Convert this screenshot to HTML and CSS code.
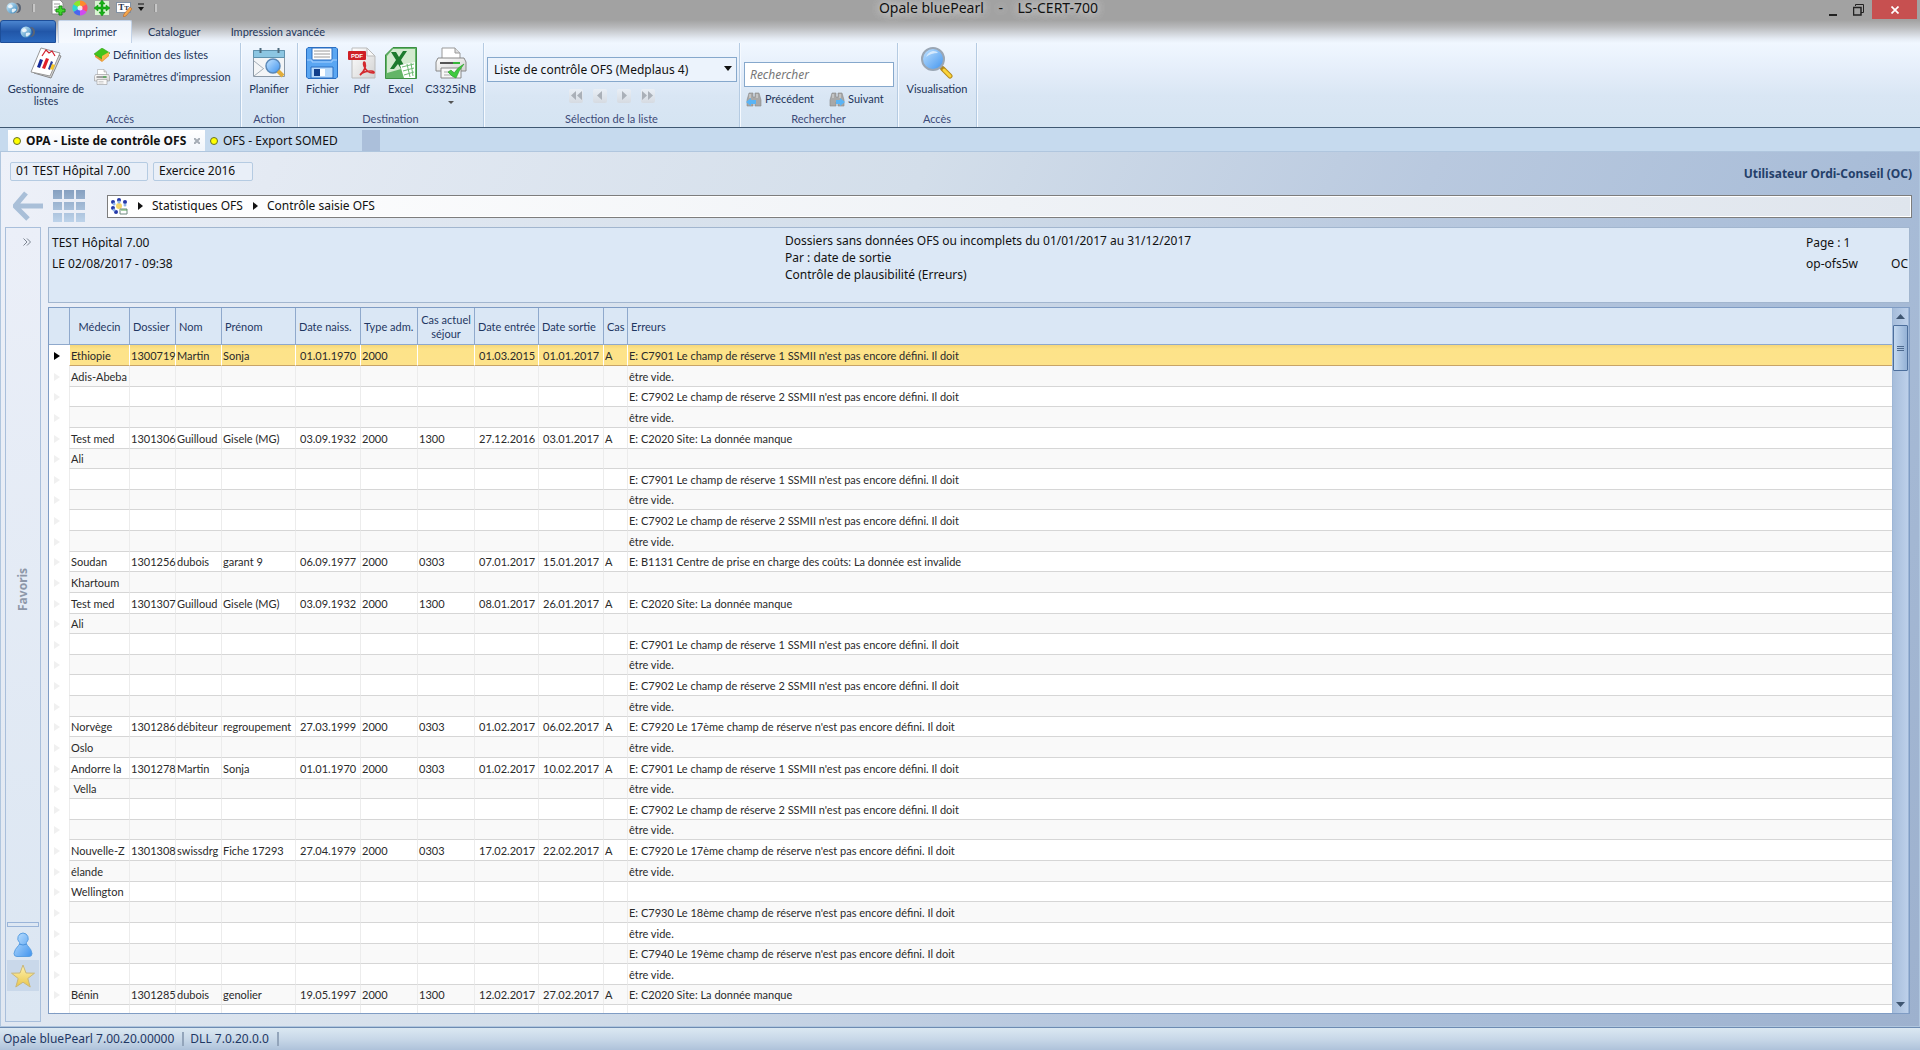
FILE: index.html
```html
<!DOCTYPE html>
<html lang="fr">
<head>
<meta charset="utf-8">
<title>Opale bluePearl - LS-CERT-700</title>
<link rel="stylesheet" href="styles.css">
</head>
<body>
<svg class="defs" aria-hidden="true">
  <defs>
    <linearGradient id="g-blue" x1="0" y1="0" x2="1" y2="1"><stop offset="0" stop-color="#c4e4ff"/><stop offset="1" stop-color="#3f93ee"/></linearGradient>
    <linearGradient id="g-globe" x1="0" y1="0" x2="1" y2="1"><stop offset="0" stop-color="#d9f3ff"/><stop offset="1" stop-color="#2d7fb8"/></linearGradient>
    <linearGradient id="g-paper" x1="0" y1="0" x2="1" y2="1"><stop offset="0" stop-color="#ffffff"/><stop offset="1" stop-color="#d2d2d2"/></linearGradient>
    <linearGradient id="g-tiles" x1="0" y1="0" x2="0" y2="1"><stop offset="0" stop-color="#86a0c0"/><stop offset="1" stop-color="#bdd3ea"/></linearGradient>
    <linearGradient id="g-star" x1="0" y1="0" x2="0" y2="1"><stop offset="0" stop-color="#fff3b0"/><stop offset="1" stop-color="#e9c64c"/></linearGradient>
    <symbol id="globe" viewBox="0 0 16 12"><path d="M10 1q5 0 5 5t-5 5q3-2 3-5t-3-5z" fill="#5a6474"/><circle cx="6" cy="6" r="5.500" fill="url(#g-globe)"/><path d="M2 4q2-3 4-1t-1 3-3-2zM6 7q3-1 4 0t-2 3-2-3z" fill="#fff" opacity=".8"/></symbol>
    <symbol id="printer" viewBox="0 0 32 32"><path d="M7 12V1h13l5 5v6z" fill="#fff" stroke="#999"/><path d="M20 1v5h5" fill="#ddd" stroke="#999"/><path d="M3 11h26l2 4v9H1v-9z" fill="url(#g-paper)" stroke="#888"/><path d="M5 16h20" stroke="#222" stroke-width="1.500"/><path d="M18 16h7" stroke="#35b53a" stroke-width="2"/><path d="M6 21h20v10H6z" fill="#f8f8f8" stroke="#888"/><path d="M9 25h10M9 28h10" stroke="#aaa"/></symbol>
    <symbol id="binocular" viewBox="0 0 16 16"><path d="M3 2h4v4h2V2h4l2 7v6H9v-4H7v4H1V9z" fill="#a8a8a8" stroke="#888" stroke-width=".6"/><path d="M4 3v4M11 3v4" stroke="#ddd"/></symbol>
  </defs>
</svg>

<header class="app-head">
  <div class="title-bar">
    <div class="quick">
      <button class="plain q-globe" aria-label="Opale"><svg width="16" height="12"><use href="#globe"/></svg></button>
      <span class="grip"></span>
      <button class="plain q-item" aria-label="Nouveau"><svg width="16" height="16" viewBox="0 0 16 16"><path d="M2 0h8l3 3v11H2z" fill="#fff" stroke="#8c8c8c"/><path d="M4 4h6M4 7h6M4 10h3" stroke="#999"/><path d="M9 6h3v3h3v3h-3v3H9v-3H6V9h3z" fill="#41d62c" stroke="#178a12"/></svg></button>
      <button class="plain q-item" aria-label="Couleurs"><svg width="16" height="16" viewBox="-8 -8 16 16"><path d="M0 0V-7.500A7.500 7.500 0 0 1 6.500-3.700z" fill="#ff8a2a"/><path d="M0 0 6.500-3.700A7.500 7.500 0 0 1 6.500 3.700z" fill="#ff4a6a"/><path d="M0 0 6.500 3.700A7.500 7.500 0 0 1 0 7.500z" fill="#d04af0"/><path d="M0 0V7.500A7.500 7.500 0 0 1-6.500 3.700z" fill="#4a66f0"/><path d="M0 0-6.500 3.700A7.500 7.500 0 0 1-6.500-3.700z" fill="#2ad8d0"/><path d="M0 0-6.500-3.700A7.500 7.500 0 0 1 0-7.500z" fill="#8ae82a"/><circle r="2.500" fill="#fff" opacity=".8"/></svg></button>
      <button class="plain q-item" aria-label="Ajuster"><svg width="16" height="16" viewBox="0 0 16 16"><rect x="1" y="1" width="14" height="14" fill="#d8f5d2"/><path d="M8 0l3 4H9v3h3V5l4 3-4 3V9H9v3h2l-3 4-3-4h2V9H4v2L0 8l4-3v2h3V4H5z" fill="#16b016" stroke="#0b8a0b" stroke-width=".5"/></svg></button>
      <button class="plain q-item q-text" aria-label="Texte"><span class="tt">T<small>T</small></span><svg class="pencil" width="9" height="10" viewBox="0 0 9 10"><path d="M0 10l1-3 6-7 2 2-6 7z" fill="#f4a64a" stroke="#b8662a" stroke-width=".6"/></svg></button>
      <button class="plain q-more" aria-label="Personnaliser"><svg width="6" height="9" viewBox="0 0 6 9"><path d="M0 1h6" stroke="#111"/><path d="M0 4h6L3 8z" fill="#111"/></svg></button>
      <span class="grip"></span>
    </div>
    <h1 class="app-title">Opale bluePearl&nbsp;&nbsp;&nbsp; -&nbsp;&nbsp;&nbsp; LS-CERT-700</h1>
    <div class="win">
      <button class="plain" aria-label="Réduire"><svg width="8" height="12" viewBox="0 0 8 12"><path d="M0 11h8" stroke="#222" stroke-width="2"/></svg></button>
      <button class="plain" aria-label="Restaurer"><svg width="11" height="12" viewBox="0 0 11 12"><path d="M2.500 2V.5h8v8H8" fill="none" stroke="#222"/><path d="M0 3.500h8V11H.5V3" fill="none" stroke="#222" stroke-width="1.500"/></svg></button>
      <button class="plain close" aria-label="Fermer"><svg width="8" height="8" viewBox="0 0 8 8"><path d="M.5.5l7 7M7.500.5l-7 7" stroke="#fff" stroke-width="1.700"/></svg></button>
    </div>
  </div>
  <nav class="ribbon-tabs">
    <button class="file-tab" aria-label="Fichier"><svg width="16" height="12"><use href="#globe"/></svg></button>
    <a href="#" class="rtab rtab-on">Imprimer</a>
    <a href="#" class="rtab">Cataloguer</a>
    <a href="#" class="rtab">Impression avancée</a>
  </nav>
  <div class="ribbon">
    <section class="group g-access">
      <div class="tools">
        <button class="big big-wide"><svg width="32" height="32" viewBox="0 0 32 32"><path d="M4 26 12 3l19 6-10 22z" fill="#d5d5d5" stroke="#888"/><path d="M1 25 11 1l19 5-10 23z" fill="#fff" stroke="#999"/><path d="M12 9l4-6 3 3 3-2 3 5" fill="none" stroke="#d21f2c" stroke-width="1.200"/><path d="M10 12l3 1-3 8-3-1z" fill="#152a9a"/><path d="M16 11l3 1-4 10-3-1z" fill="#e01f28"/><path d="M21 14l2 1-3 8-2-1z" fill="#2a3f9a"/><path d="M22 17l3 1-2 5-3-1z" fill="#f4c62a"/></svg><span>Gestionnaire de listes</span></button>
        <div class="smalls">
          <button class="small"><svg width="16" height="14" viewBox="0 0 16 14"><path d="M1 6v3l7 5 7-6V5z" fill="#e89a3a"/><path d="M0 6 8 0l8 5-8 6z" fill="#43c41c" stroke="#2c9a12" stroke-width=".5"/><path d="M8 8l7-4v3l-7 6z" fill="#f6b84a"/></svg>Définition des listes</button>
          <button class="small"><svg width="16" height="16"><use href="#printer"/></svg>Paramètres d'impression</button>
        </div>
      </div>
      <h2>Accès</h2>
    </section>
    <section class="group g-action">
      <div class="tools">
        <button class="big"><svg width="32" height="32" viewBox="0 0 32 32"><path d="M.5 3.500h31v26H.5z" fill="#f3f5f7" stroke="#8a98a6"/><path d="M.5 3.500h31v7H.5z" fill="#8cc6e2" stroke="#5f92ae"/><path d="M7.500 1v5M25.500 1v5" stroke="#4d6a7d" stroke-width="2"/><path d="M1 14l10 8M1 29l9-7" stroke="#a4aeb8"/><circle cx="20" cy="19" r="7" fill="url(#g-blue)" stroke="#5a88b8" stroke-width="1.500"/><path d="M25 24l5 5" stroke="#e2ae3c" stroke-width="4"/></svg><span>Planifier</span></button>
      </div>
      <h2>Action</h2>
    </section>
    <section class="group g-dest">
      <div class="tools">
        <button class="big"><svg width="32" height="32" viewBox="0 0 32 32"><path d="M2 .5h28L31.500 2v28L30 31.500H2L.5 30V2z" fill="#5aa6f2" stroke="#2a6fc2"/><path d="M6 1h20v12H6z" fill="#fff" stroke="#2a6fc2"/><path d="M8 4h16M8 7h16M8 10h16" stroke="#9a9a9a"/><path d="M1 13h5v2h20v-2h5" fill="none" stroke="#a5d0ff"/><path d="M5 20h22v11H5z" fill="#b5d8fb" stroke="#2a6fc2"/><path d="M8 22h6v7H8z" fill="#123f8c"/><path d="M14 22h5v7h-5z" fill="#fff"/></svg><span>Fichier</span></button>
        <button class="big"><svg width="28" height="32" viewBox="0 0 28 32"><path d="M4 1h15l8 8v22H4z" fill="url(#g-paper)" stroke="#bbb"/><path d="M19 1v8h8z" fill="#f8f8f8" stroke="#bbb"/><rect y="4" width="18" height="9" rx="1" fill="#cf2026"/><text x="3" y="11" class="pdf-tag">PDF</text><path d="M12 28c5-4 6-9 5-12-1-2-2 0-1 3 2 5 6 7 9 7 2 0 1-2-2-2-5 0-9 2-11 4z" fill="none" stroke="#d42a2f" stroke-width="1.700"/></svg><span>Pdf</span></button>
        <button class="big"><svg width="32" height="32" viewBox="0 0 32 32"><path d="M8 .5h23.500v31H.5V8z" fill="#63b567" stroke="#3c8f43"/><path d="M8 2h22v16L2 26V9z" fill="#dff0da" opacity=".9"/><path d="M6 5h5l3 5 4-6h4l-6 9 5 9h-5l-3-5-4 5H5l6-9z" fill="#1d7a2d"/><path d="M15 18l15-3v16H19z" fill="#fff"/><path d="M17 20l12-3M18 24l11-3M19 28l10-3M22 17l3 13M26 16l2 13" stroke="#6dbb72"/></svg><span>Excel</span></button>
        <button class="big big-print"><svg width="32" height="32" viewBox="0 0 32 32"><use href="#printer"/><path d="M13 25l3-2 3 3q4-6 10-9-5 6-8 14-4-1-8-6z" fill="#3fca3f" stroke="#2a972a" stroke-width=".6"/></svg><span>C3325iNB</span><i class="drop"></i></button>
      </div>
      <h2>Destination</h2>
    </section>
    <section class="group g-select">
      <div class="tools tools-col">
        <div class="combo"><select aria-label="Liste"><option>Liste de contrôle OFS (Medplaus 4)</option></select></div>
        <div class="pager">
          <button class="page" aria-label="Première"><svg width="14" height="14" viewBox="0 0 14 14"><path d="M7 2v9L2 6.500zM13 2v9L8 6.500z" fill="#aab0b8"/></svg></button>
          <button class="page" aria-label="Précédente"><svg width="14" height="14" viewBox="0 0 14 14"><path d="M9 2v9L4 6.500z" fill="#aab0b8"/></svg></button>
          <button class="page" aria-label="Suivante"><svg width="14" height="14" viewBox="0 0 14 14"><path d="M5 2v9l5-4.500z" fill="#aab0b8"/></svg></button>
          <button class="page" aria-label="Dernière"><svg width="14" height="14" viewBox="0 0 14 14"><path d="M1 2v9l5-4.500zM7 2v9l5-4.500z" fill="#aab0b8"/></svg></button>
        </div>
      </div>
      <h2>Sélection de la liste</h2>
    </section>
    <section class="group g-search">
      <div class="tools tools-col">
        <input class="search" type="text" placeholder="Rechercher" aria-label="Rechercher">
        <div class="finders">
          <button class="small"><svg width="16" height="16" viewBox="0 0 16 16"><use href="#binocular"/><path d="M0 11l5-4v2h5v4H5v2z" fill="#5ab4f5"/></svg>Précédent</button>
          <button class="small"><svg width="16" height="16" viewBox="0 0 16 16"><use href="#binocular"/><path d="M16 11l-5-4v2H7v4h4v2z" fill="#5ab4f5"/></svg>Suivant</button>
        </div>
      </div>
      <h2>Rechercher</h2>
    </section>
    <section class="group g-view">
      <div class="tools">
        <button class="big"><svg width="32" height="32" viewBox="0 0 32 32"><path d="M19 19l4 4" stroke="#8a8a8a" stroke-width="4"/><path d="M22 22l7 7" stroke="#b58a1a" stroke-width="5" stroke-linecap="round"/><path d="M23 23l6 6" stroke="#fbd53a" stroke-width="3" stroke-linecap="round"/><circle cx="12" cy="12" r="11" fill="url(#g-blue)" stroke="#9aa6b4" stroke-width="2"/><path d="M5 10q2-5 7-6 4 0 5 2-7 0-12 4z" fill="#fff" opacity=".6"/></svg><span>Visualisation</span></button>
      </div>
      <h2>Accès</h2>
    </section>
  </div>
</header>

<nav class="doc-tabs">
  <a href="#" class="doc doc-on"><i class="dot"></i>OPA - Liste de contrôle OFS<svg class="doc-x" width="6" height="6" viewBox="0 0 6 6"><path d="M0 0l6 6M6 0L0 6" stroke="#a6adb6" stroke-width="2"/></svg></a>
  <a href="#" class="doc"><i class="dot"></i>OFS - Export SOMED</a>
  <button class="doc-new" aria-label="Nouvel onglet"></button>
</nav>

<main class="work">
  <div class="context">
    <button class="ctx ctx-a">01 TEST Hôpital 7.00</button>
    <button class="ctx ctx-b">Exercice 2016</button>
    <strong class="user">Utilisateur Ordi-Conseil (OC)</strong>
  </div>
  <div class="nav-row">
    <button class="plain" aria-label="Retour"><svg width="30" height="30" viewBox="0 0 30 30"><path d="M13 2 2 15l13 13M2 15h28" fill="none" stroke="#a9bfd8" stroke-width="5"/></svg></button>
    <button class="plain nav-grid" aria-label="Menu"><svg width="32" height="32" viewBox="0 0 32 32"><path d="M0 0h9v9H0zM11 0h10v9H11zM23 0h9v9h-9zM0 12h9v8H0zM11 12h10v8H11zM23 12h9v8h-9zM0 23h9v9H0zM11 23h10v9H11zM23 23h9v9h-9z" fill="url(#g-tiles)"/></svg></button>
    <nav class="crumbs">
      <svg width="17" height="17" viewBox="0 0 17 17"><circle cx="8" cy="8" r="3" fill="#f5d66b"/><g fill="#2438a8"><circle cx="8" cy="2" r="2"/><circle cx="2" cy="4" r="2"/><circle cx="14" cy="4" r="2"/><circle cx="2" cy="10" r="2"/><circle cx="5" cy="14" r="2"/></g><g fill="#8fb4ea"><circle cx="8" cy="4" r="1.500"/><circle cx="3" cy="6" r="1.500"/><circle cx="14" cy="7" r="1.500"/><circle cx="3" cy="12" r="1.500"/></g><path d="M9 11h7v5H9z" fill="#fff" stroke="#6f8a80"/><path d="M10 12h6" stroke="#52a552"/></svg>
      <i class="arrow"></i><a href="#">Statistiques OFS</a><i class="arrow"></i><a href="#">Contrôle saisie OFS</a>
    </nav>
  </div>
  <div class="body">
    <aside class="side">
      <button class="plain expand" aria-label="Déplier"><svg width="8" height="8" viewBox="0 0 8 8"><path d="M.5.5 4 4 .5 7.500M4 .5 7.500 4 4 7.500" fill="none" stroke="#7d8591"/></svg></button>
      <div class="fav">Favoris</div>
      <div class="splitter"></div>
      <button class="plain side-btn" aria-label="Utilisateur"><svg width="20" height="26" viewBox="0 0 20 26"><path d="M10 1a5.500 5.500 0 0 1 3.500 9.500q-1 1 1 3 4 4 4.500 8 0 3-3 3H4q-3 0-3-3 .5-4 4.500-8 2-2 1-3A5.500 5.500 0 0 1 10 1z" fill="url(#g-blue)" stroke="#5a9fe2"/><path d="M6 12q4 2 8 0" fill="none" stroke="#4a93dc"/></svg></button>
      <button class="plain side-btn side-on" aria-label="Favoris"><svg width="24" height="24" viewBox="0 0 24 24"><path d="M12 1l3 8 8.500.2-6.700 5.300L19.200 23 12 18.200 4.800 23l2.400-8.500L.5 9.200 9 9z" fill="url(#g-star)" stroke="#c9b77a"/></svg></button>
    </aside>
    <div class="report">
      <section class="info">
        <p class="info-left">TEST Hôpital 7.00<br>LE 02/08/2017 - 09:38</p>
        <p class="info-mid">Dossiers sans données OFS ou incomplets du 01/01/2017 au 31/12/2017<br>Par : date de sortie<br>Contrôle de plausibilité (Erreurs)</p>
        <p class="info-right"><span>Page : 1</span><span class="prog">op-ofs5w</span><span>OC</span></p>
      </section>
      <section class="list">
        <div class="list-view">
        <table>
          <colgroup><col class="c-mark"><col class="c-med"><col class="c-dos"><col class="c-dos"><col class="c-pre"><col class="c-date"><col class="c-adm"><col class="c-adm"><col class="c-out"><col class="c-date"><col class="c-cas"><col></colgroup>
          <thead><tr><th></th><th class="mid">Médecin</th><th>Dossier</th><th>Nom</th><th>Prénom</th><th>Date naiss.</th><th>Type adm.</th><th class="mid">Cas actuel séjour</th><th>Date entrée</th><th>Date sortie</th><th>Cas</th><th>Erreurs</th></tr></thead>
          <tbody>
          <tr class="sel"><td></td><td>Ethiopie</td><td>1300719</td><td>Martin</td><td>Sonja</td><td>01.01.1970</td><td>2000</td><td></td><td>01.03.2015</td><td>01.01.2017</td><td>A</td><td>E: C7901 Le champ de réserve 1 SSMII n'est pas encore défini. Il doit</td></tr>
          <tr><td></td><td>Adis-Abeba</td><td></td><td></td><td></td><td></td><td></td><td></td><td></td><td></td><td></td><td>être vide.</td></tr>
          <tr><td></td><td></td><td></td><td></td><td></td><td></td><td></td><td></td><td></td><td></td><td></td><td>E: C7902 Le champ de réserve 2 SSMII n'est pas encore défini. Il doit</td></tr>
          <tr><td></td><td></td><td></td><td></td><td></td><td></td><td></td><td></td><td></td><td></td><td></td><td>être vide.</td></tr>
          <tr><td></td><td>Test med</td><td>1301306</td><td>Guilloud</td><td>Gisele (MG)</td><td>03.09.1932</td><td>2000</td><td>1300</td><td>27.12.2016</td><td>03.01.2017</td><td>A</td><td>E: C2020 Site: La donnée manque</td></tr>
          <tr><td></td><td>Ali</td><td></td><td></td><td></td><td></td><td></td><td></td><td></td><td></td><td></td><td></td></tr>
          <tr><td></td><td></td><td></td><td></td><td></td><td></td><td></td><td></td><td></td><td></td><td></td><td>E: C7901 Le champ de réserve 1 SSMII n'est pas encore défini. Il doit</td></tr>
          <tr><td></td><td></td><td></td><td></td><td></td><td></td><td></td><td></td><td></td><td></td><td></td><td>être vide.</td></tr>
          <tr><td></td><td></td><td></td><td></td><td></td><td></td><td></td><td></td><td></td><td></td><td></td><td>E: C7902 Le champ de réserve 2 SSMII n'est pas encore défini. Il doit</td></tr>
          <tr><td></td><td></td><td></td><td></td><td></td><td></td><td></td><td></td><td></td><td></td><td></td><td>être vide.</td></tr>
          <tr><td></td><td>Soudan</td><td>1301256</td><td>dubois</td><td>garant 9</td><td>06.09.1977</td><td>2000</td><td>0303</td><td>07.01.2017</td><td>15.01.2017</td><td>A</td><td>E: B1131 Centre de prise en charge des coûts: La donnée est invalide</td></tr>
          <tr><td></td><td>Khartoum</td><td></td><td></td><td></td><td></td><td></td><td></td><td></td><td></td><td></td><td></td></tr>
          <tr><td></td><td>Test med</td><td>1301307</td><td>Guilloud</td><td>Gisele (MG)</td><td>03.09.1932</td><td>2000</td><td>1300</td><td>08.01.2017</td><td>26.01.2017</td><td>A</td><td>E: C2020 Site: La donnée manque</td></tr>
          <tr><td></td><td>Ali</td><td></td><td></td><td></td><td></td><td></td><td></td><td></td><td></td><td></td><td></td></tr>
          <tr><td></td><td></td><td></td><td></td><td></td><td></td><td></td><td></td><td></td><td></td><td></td><td>E: C7901 Le champ de réserve 1 SSMII n'est pas encore défini. Il doit</td></tr>
          <tr><td></td><td></td><td></td><td></td><td></td><td></td><td></td><td></td><td></td><td></td><td></td><td>être vide.</td></tr>
          <tr><td></td><td></td><td></td><td></td><td></td><td></td><td></td><td></td><td></td><td></td><td></td><td>E: C7902 Le champ de réserve 2 SSMII n'est pas encore défini. Il doit</td></tr>
          <tr><td></td><td></td><td></td><td></td><td></td><td></td><td></td><td></td><td></td><td></td><td></td><td>être vide.</td></tr>
          <tr><td></td><td>Norvège</td><td>1301286</td><td>débiteur</td><td>regroupement</td><td>27.03.1999</td><td>2000</td><td>0303</td><td>01.02.2017</td><td>06.02.2017</td><td>A</td><td>E: C7920 Le 17ème champ de réserve n'est pas encore défini. Il doit</td></tr>
          <tr><td></td><td>Oslo</td><td></td><td></td><td></td><td></td><td></td><td></td><td></td><td></td><td></td><td>être vide.</td></tr>
          <tr><td></td><td>Andorre la</td><td>1301278</td><td>Martin</td><td>Sonja</td><td>01.01.1970</td><td>2000</td><td>0303</td><td>01.02.2017</td><td>10.02.2017</td><td>A</td><td>E: C7901 Le champ de réserve 1 SSMII n'est pas encore défini. Il doit</td></tr>
          <tr><td></td><td>&nbsp;Vella</td><td></td><td></td><td></td><td></td><td></td><td></td><td></td><td></td><td></td><td>être vide.</td></tr>
          <tr><td></td><td></td><td></td><td></td><td></td><td></td><td></td><td></td><td></td><td></td><td></td><td>E: C7902 Le champ de réserve 2 SSMII n'est pas encore défini. Il doit</td></tr>
          <tr><td></td><td></td><td></td><td></td><td></td><td></td><td></td><td></td><td></td><td></td><td></td><td>être vide.</td></tr>
          <tr><td></td><td>Nouvelle-Z</td><td>1301308</td><td>swissdrg</td><td>Fiche 17293</td><td>27.04.1979</td><td>2000</td><td>0303</td><td>17.02.2017</td><td>22.02.2017</td><td>A</td><td>E: C7920 Le 17ème champ de réserve n'est pas encore défini. Il doit</td></tr>
          <tr><td></td><td>élande</td><td></td><td></td><td></td><td></td><td></td><td></td><td></td><td></td><td></td><td>être vide.</td></tr>
          <tr><td></td><td>Wellington</td><td></td><td></td><td></td><td></td><td></td><td></td><td></td><td></td><td></td><td></td></tr>
          <tr><td></td><td></td><td></td><td></td><td></td><td></td><td></td><td></td><td></td><td></td><td></td><td>E: C7930 Le 18ème champ de réserve n'est pas encore défini. Il doit</td></tr>
          <tr><td></td><td></td><td></td><td></td><td></td><td></td><td></td><td></td><td></td><td></td><td></td><td>être vide.</td></tr>
          <tr><td></td><td></td><td></td><td></td><td></td><td></td><td></td><td></td><td></td><td></td><td></td><td>E: C7940 Le 19ème champ de réserve n'est pas encore défini. Il doit</td></tr>
          <tr><td></td><td></td><td></td><td></td><td></td><td></td><td></td><td></td><td></td><td></td><td></td><td>être vide.</td></tr>
          <tr><td></td><td>Bénin</td><td>1301285</td><td>dubois</td><td>genolier</td><td>19.05.1997</td><td>2000</td><td>1300</td><td>12.02.2017</td><td>27.02.2017</td><td>A</td><td>E: C2020 Site: La donnée manque</td></tr>
          <tr><td></td><td></td><td></td><td></td><td></td><td></td><td></td><td></td><td></td><td></td><td></td><td></td></tr>
          </tbody>
        </table>
        </div>
        <div class="scroll">
          <button class="plain sb" aria-label="Monter"><svg width="9" height="5" viewBox="0 0 9 5"><path d="M0 5 4.500 0 9 5z" fill="#3f5672"/></svg></button>
          <div class="thumb"><i></i><i></i><i></i></div>
          <button class="plain sb sb-down" aria-label="Descendre"><svg width="9" height="5" viewBox="0 0 9 5"><path d="M0 0 4.500 5 9 0z" fill="#3f5672"/></svg></button>
        </div>
      </section>
    </div>
  </div>
</main>

<footer class="status"><span>Opale bluePearl 7.00.20.00000</span><span>DLL 7.0.20.0.0</span></footer>
</body>
</html>
```
FILE: styles.css
```css
* { box-sizing: border-box; }
html, body { height: 100%; }
body { margin: 0; display: flex; flex-direction: column; overflow: hidden; font: 12px/16px "Noto Sans", sans-serif; color: #111; background: #c6daee; }
a { color: inherit; text-decoration: none; }
button, input, select { font: inherit; color: inherit; }
h1, h2, p { margin: 0; font-weight: normal; }
svg { display: block; flex: none; }
.defs { position: absolute; width: 0; height: 0; }
.plain { border: 0; padding: 0; background: none; display: flex; align-items: center; justify-content: center; }

/* Window title and ribbon */
.app-head { flex: none; border-bottom: 1px solid #3f5872; background: linear-gradient(#a2a2a2 0, #a2a2a2 20px, #b8b9bb 27px, #e6ecf5 39px, #f0f7ff 43px, #e5eefa 70px, #d9e6f4 96px, #d5e4f2 100%); }
.title-bar { display: flex; height: 20px; align-items: flex-start; }
.quick { display: flex; align-items: center; width: 160px; padding-left: 6px; height: 15px; }
.q-globe { height: 10px; }
.grip { width: 3px; height: 8px; margin-left: 10px; background: #c6c6c6; border-left: 1px solid #8d8d8d; }
.q-item { width: 17px; margin-left: 5px; }
.grip + .q-item { margin-left: 14px; }
.q-text { position: relative; }
.tt { width: 15px; height: 11px; border: 1px solid #8292a4; background: #fff; font: bold 9px/9px "Liberation Serif", serif; color: #26324a; }
.tt small { font-size: 7px; }
.pencil { position: absolute; right: 0; bottom: -4px; }
.q-more { margin-left: 6px; }
.app-title { flex: 1; padding-right: 12px; text-align: center; font-size: 14px; line-height: 16px; color: #111; text-shadow: 0 0 8px #ddd, 0 0 8px #ddd; }
.win { display: flex; gap: 16px; padding-right: 3px; }
.win button { height: 19px; }
.win .close { width: 45px; margin-left: -8px; background: #c75050; }
.ribbon-tabs { display: flex; height: 23px; font: 11px/24px Lato, sans-serif; color: #23355a; }
.file-tab { width: 56px; margin-right: 2px; border: 1px solid #1d4e99; border-radius: 3px 3px 0 0; background: linear-gradient(#4b85cf, #2156a8 50%, #2b69be); display: flex; align-items: center; justify-content: center; }
.rtab { padding: 0 15px; }
.rtab-on { width: 74px; margin-right: 1px; padding: 0; text-align: center; background: linear-gradient(#eef3fa, #f6faff); border: 1px solid #c3d3e8; border-bottom: 0; border-radius: 2px 2px 0 0; line-height: 22px; }
.ribbon { display: flex; height: 84px; font: 11px/12px Lato, sans-serif; color: #23355a; }
.group { display: flex; flex-direction: column; border-right: 1px solid #b5cbe2; box-shadow: 1px 0 #f6faff; }
.group h2 { font-size: 11px; line-height: 16px; text-align: center; color: #3c4a78; }
.tools { flex: 1; display: flex; align-items: flex-start; padding-top: 4px; }
.g-access { width: 241px; }
.g-action { width: 57px; }
.g-dest { width: 186px; }
.g-select { width: 256px; }
.g-search { width: 158px; }
.g-view { width: 79px; }
.g-action .tools, .g-view .tools { justify-content: center; }
.g-dest .tools { padding-left: 8px; gap: 9px; }
.big { border: 0; padding: 0; background: none; display: flex; flex-direction: column; align-items: center; gap: 4px; }
.big-wide { width: 78px; margin-left: 7px; }
.big-print { width: 50px; }
.drop { border: 3px solid transparent; border-top: 3px solid #555; border-bottom: 0; margin-top: 2px; }
.smalls { display: flex; flex-direction: column; gap: 6px; margin-left: 9px; }
.small { border: 0; padding: 0; background: none; display: flex; align-items: center; gap: 3px; height: 16px; white-space: nowrap; }
.tools-col { flex-direction: column; }
.combo { position: relative; width: 250px; margin: 10px 0 0 3px; font: 12px/16px "Noto Sans", sans-serif; color: #111; }
.combo select { display: block; width: 100%; height: 25px; padding: 1px 6px 0; appearance: none; border: 1px solid #86a8cc; border-radius: 0; background: #ecf3fc; }
.combo::after { content: ""; position: absolute; right: 5px; top: 9px; border: 4px solid transparent; border-top: 5px solid #111; border-bottom: 0; pointer-events: none; }
.pager { display: flex; gap: 10px; align-self: center; margin-top: 7px; }
.page { border: 0; padding: 0; width: 14px; height: 14px; border-radius: 2px; background: linear-gradient(#e9eff6, #d6dbe2); }
.search { width: 150px; height: 25px; margin: 15px 0 0 4px; padding: 0 5px; border: 1px solid #86a8cc; background: #fff; font: italic 12px/16px "Noto Sans", sans-serif; }
.search::placeholder { color: #777; }
.finders { display: flex; gap: 15px; padding: 4px 0 0 6px; }
.pdf-tag { font: bold 6px "Liberation Sans", sans-serif; fill: #fff; }

/* Document tabs */
.doc-tabs { flex: none; display: flex; height: 23px; padding: 2px 0 0 8px; background: #c6daee; }
.doc { display: flex; align-items: center; gap: 5px; padding: 0 5px; white-space: nowrap; }
.doc-on { width: 197px; font-weight: bold; background: linear-gradient(#fff, #f1f5fb); }
.doc-x { margin-left: auto; }
.dot { flex: none; width: 8px; height: 8px; border: 1px solid #66702a; border-radius: 50%; background: #ff0; }
.doc-new { width: 18px; margin-left: 19px; padding: 0; border: 0; background: #abbfda; }

/* Work area */
.work { flex: 1; min-height: 0; display: flex; flex-direction: column; border: 1px solid #b0c6de; padding: 8px 7px 4px 4px; background: linear-gradient(115deg, #eef1f9 0, #e4eaf3 12%, #d3deea 40%, #b9c9df 62%, #a9bdd8 80%, #9db1ce 100%); }
.context { display: flex; align-items: center; gap: 5px; padding-left: 5px; }
.ctx { height: 19px; padding: 0 5px; border: 1px solid #b5cbe2; border-radius: 2px; background: #e9eff8; line-height: 16px; text-align: left; }
.ctx-a { width: 138px; }
.ctx-b { width: 100px; }
.user { margin-left: auto; padding-top: 6px; color: #24406a; }
.nav-row { display: flex; align-items: center; padding: 8px 0 5px 8px; }
.nav-grid { margin: 0 22px 0 10px; }
.crumbs { flex: 1; display: flex; align-items: center; height: 23px; padding: 0 3px; border: 1px solid #7d7d7d; box-shadow: inset 0 0 0 1px #fff; background: linear-gradient(90deg, #fff, #dfe5ed); }
.arrow { margin: 0 9px 0 10px; border: 4px solid transparent; border-left: 5px solid #111; border-right: 0; }
.body { flex: 1; min-height: 0; display: flex; gap: 7px; }
.side { flex: none; width: 36px; display: flex; flex-direction: column; align-items: center; padding: 0 1px 30px; border: 1px solid #a9bfdb; background: linear-gradient(#ebeff8, #dbe6f2); }
.expand { height: 28px; margin-left: 8px; }
.fav { flex: 1; writing-mode: vertical-rl; transform: rotate(180deg); text-align: center; font-weight: bold; color: #8d97a8; }
.splitter { width: 100%; height: 5px; border: 1px solid #9ab4d8; margin-bottom: 2px; }
.side-btn { width: 100%; height: 31px; }
.side-on { background: #c9d8ea; }
.report { flex: 1; min-width: 0; display: flex; flex-direction: column; gap: 4px; padding-right: 2px; margin-bottom: 8px; }
.info { flex: none; display: grid; grid-template-columns: 733px 1fr 102px; height: 76px; padding: 0 1px 0 3px; border: 1px solid #a2b6cf; background: #dce8f6; }
.info-left { padding-top: 4px; line-height: 21px; }
.info-mid { padding-top: 4px; line-height: 17px; }
.info-right { padding-top: 4px; line-height: 21px; display: grid; grid-template-columns: 1fr auto; grid-auto-rows: 21px; }
.prog { grid-column: 1; }
.list { flex: 1; min-height: 0; display: flex; border: 1px solid #7f9cc4; background: #fff; }
.list-view { flex: 1; min-width: 0; overflow: hidden; }

/* Grid */
table { width: 100%; table-layout: fixed; border-collapse: separate; border-spacing: 0; font: 11px/14px Lato, sans-serif; color: #2a2a2a; }
.c-mark { width: 20px; }
.c-med { width: 60px; }
.c-dos { width: 46px; }
.c-pre { width: 74px; }
.c-date { width: 65px; }
.c-adm { width: 57px; }
.c-out { width: 64px; }
.c-cas { width: 24px; }
th { height: 37px; padding: 1px 0 0 3px; font-weight: normal; text-align: left; color: #1f3763; background: #dae7f5; border-left: 1px solid #8fa9cc; border-bottom: 1px solid #8fa9cc; white-space: nowrap; }
th.mid { padding: 1px 0 0; text-align: center; white-space: normal; }
th:first-child, td:first-child { border-left: 0; }
td { height: 21px; padding: 1px 0 0 1px; border-left: 1px solid #ececec; border-bottom: 1px solid #d6d6d6; white-space: nowrap; }
tr:nth-child(8n+3) td, tr:nth-child(8n+6) td, tr:nth-child(8n) td { height: 20px; }
td:nth-child(6), td:nth-child(9), td:nth-child(10) { padding-left: 4px; }
tbody tr:nth-child(even) td { background: #f9f9f9; }
tbody tr td:first-child { padding-left: 5px; background: #fff; border-bottom-color: #fff; }
td:first-child::before { content: ""; display: block; width: 0; border: 4px solid transparent; border-left: 6px solid #f0f0f0; border-right: 0; }
.sel td { background: linear-gradient(#f6d778, #fde389 20%, #fde38b); border-left-color: #fff; border-bottom-color: #c8a468; }
.sel td:first-child::before { border-left-color: #000; }

.scroll { flex: none; width: 17px; display: flex; flex-direction: column; border: 1px solid #9db6d6; border-width: 0 1px; background: linear-gradient(90deg, #a6bddb, #bdd0ea); }
.sb { height: 17px; }
.sb-down { margin-top: auto; }
.thumb { height: 46px; border: 1px solid #4d6f9c; border-radius: 1px; background: linear-gradient(90deg, #c4d9f0, #94b1d5); display: flex; flex-direction: column; align-items: center; justify-content: center; gap: 1px; }
.thumb i { width: 7px; height: 1px; background: #4d6a8f; }

.status { flex: none; display: flex; align-items: center; height: 23px; padding-left: 3px; border-top: 1px solid #6d8bb2; background: linear-gradient(#dbe8f2, #c8d8e8 50%, #aec2da); color: #1f3763; }
.status span { padding-right: 8px; margin-right: 6px; border-right: 2px solid #93a5bb; line-height: 14px; }
```
